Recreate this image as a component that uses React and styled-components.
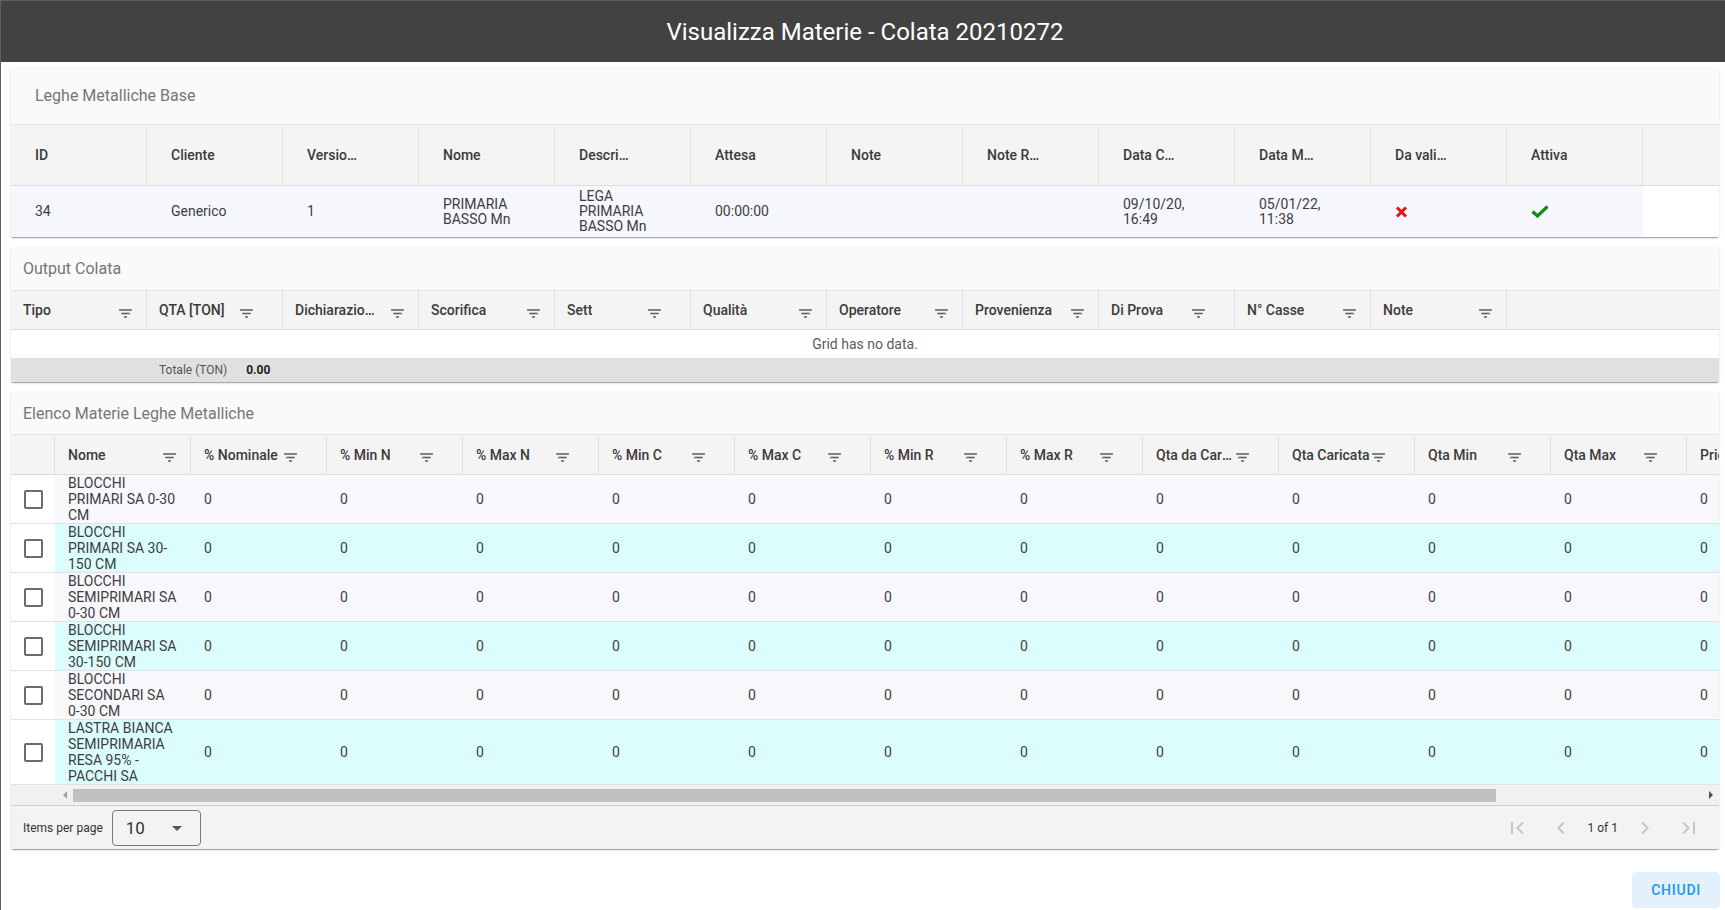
import React from 'react';
import styled, { createGlobalStyle } from 'styled-components';

const GlobalStyle = createGlobalStyle`
  *, *::before, *::after { box-sizing: border-box; }
  html, body { margin: 0; padding: 0; }
  body {
    background: #5f5f5f;
    font-family: Roboto, "Noto Sans", "Liberation Sans", sans-serif;
    overflow: hidden;
  }
`;

const Modal = styled.div`
  margin: 1px 0 0 1px;
  width: 1724px;
  height: 909px;
  background: #ffffff;
  display: flex;
  flex-direction: column;
  overflow: hidden;
`;

const TitleBar = styled.header`
  flex: 0 0 61px;
  background: #424242;
  color: #ffffff;
  display: flex;
  align-items: center;
  justify-content: center;
  padding-left: 4px;
  font-size: 24px;
  font-weight: 400;
`;

const Body = styled.main`
  display: flex;
  flex-direction: column;
  gap: 10px;
  padding: 5px 6px 0 10px;
`;

const Card = styled.section`
  flex-shrink: 0;
  background: #ffffff;
  border-radius: 2px;
  overflow: hidden;
  box-shadow: 0 2px 1px -1px rgba(0, 0, 0, 0.2), 0 1px 1px 0 rgba(0, 0, 0, 0.14),
    0 1px 3px 0 rgba(0, 0, 0, 0.12);
`;

const CardTitle = styled.div`
  height: ${(p) => p.$h}px;
  padding-left: ${(p) => p.$indent}px;
  display: flex;
  align-items: center;
  background: #fafafa;
  border-bottom: 1px solid #e4e4e4;
  color: #767676;
  font-size: 16px;
`;

const Grid = styled.div`
  display: grid;
  grid-template-columns: ${(p) => p.$cols};
`;

const HeadRow = styled(Grid)`
  height: ${(p) => p.$h}px;
  background: #f4f4f4;
  border-bottom: 1px solid #dcdcdc;
`;

const HeadCell = styled.div`
  display: flex;
  align-items: center;
  min-width: 0;
  padding-left: ${(p) => p.$indent}px;
  padding-right: ${(p) => (p.$num ? 27 : 12)}px;
  border-right: ${(p) => (p.$filler ? 'none' : '1px solid #e2e2e2')};
  font-size: 14px;
  font-weight: 500;
  color: #3b3b3b;
`;

const HeadLabel = styled.span`
  display: block;
  max-width: ${(p) => p.$max}px;
  overflow: hidden;
  white-space: nowrap;
  text-overflow: ellipsis;
`;

const FilterGlyph = styled.svg`
  flex-shrink: 0;
  margin-left: auto;
  margin-top: 6px;
  color: #5a5a5a;
`;

const BaseRow = styled(Grid)`
  min-height: 51px;
`;

const BaseCell = styled.div`
  display: flex;
  align-items: center;
  padding: 0 24px;
  background: ${(p) => (p.$filler ? '#ffffff' : '#f6f7fc')};
  font-size: 14px;
  line-height: 15px;
  color: #3d3d3d;
`;

const EmptyRow = styled.div`
  height: 28px;
  display: flex;
  align-items: center;
  justify-content: center;
  font-size: 14px;
  color: #5c5c5c;
`;

const SummaryRow = styled(Grid)`
  height: 24px;
  background: #e0e0e0;
  font-size: 12px;
  color: #555;
`;

const SummaryCell = styled.div`
  display: flex;
  align-items: center;
  gap: 19px;
  padding-left: 12px;
  white-space: nowrap;
`;

const SummaryValue = styled.span`
  font-weight: 700;
  color: #222;
`;

const DataRow = styled(Grid)`
  min-height: 49px;
  background: ${(p) => (p.$alt ? '#dcfdfd' : '#f8f8fc')};
  border-bottom: 1px solid #e2e2e2;
`;

const CheckCell = styled.div`
  display: flex;
  align-items: center;
  justify-content: center;
  background: #ffffff;
`;

const CheckBox = styled.span`
  width: 19px;
  height: 19px;
  border: 2px solid #6b6b6b;
  border-radius: 2px;
  background: #ffffff;
`;

const ValueCell = styled.div`
  display: flex;
  align-items: center;
  padding: 0 12px 0 13px;
  font-size: 14px;
  line-height: 16px;
  color: #3d3d3d;
`;

const ScrollBar = styled.div`
  height: 21px;
  display: flex;
  align-items: stretch;
  padding: 0 1px 0 46px;
  background: #f1f1f1;
  border-bottom: 1px solid #cfcfcf;
`;

const ScrollArrow = styled.div`
  width: 15px;
  display: flex;
  align-items: center;
  justify-content: center;
  &::before {
    content: '';
    border-top: 4px solid transparent;
    border-bottom: 4px solid transparent;
    ${(p) =>
      p.$dir === 'left'
        ? 'border-right: 4px solid #a3a3a3;'
        : 'border-left: 4px solid #505050;'}
  }
`;

const ScrollTrack = styled.div`
  flex: 1;
  display: flex;
  align-items: flex-end;
  padding-bottom: 3px;
`;

const ScrollThumb = styled.div`
  height: 13px;
  margin-left: 1px;
  width: ${(p) => p.$ratio * 100}%;
  background: #c1c1c1;
`;

const Pager = styled.div`
  height: 43px;
  display: flex;
  align-items: center;
  padding: 0 13px 0 12px;
  background: #f3f3f3;
  font-size: 12px;
  color: #333;
`;

const PerPage = styled.div`
  margin-left: 9px;
  width: 89px;
  height: 36px;
  border: 1px solid #7a7a7a;
  border-radius: 4px;
  display: flex;
  align-items: center;
  justify-content: space-between;
  padding: 0 11px 0 13px;
  font-size: 17px;
  color: #333;
  svg { color: #555; }
`;

const PageNav = styled.div`
  margin-left: auto;
  display: flex;
  align-items: center;
  gap: 10px;
`;

const NavBtn = styled.span`
  width: 34px;
  height: 34px;
  display: flex;
  align-items: center;
  justify-content: center;
  color: #c6c6c6;
`;

const Actions = styled.footer`
  flex: 1;
  display: flex;
  justify-content: flex-end;
  align-items: flex-end;
  padding: 0 5px 2px 0;
`;

const CloseButton = styled.button`
  height: 36px;
  padding: 0 19px;
  border: none;
  border-radius: 4px;
  background: #e3f1fc;
  color: #1a98f0;
  font-family: Roboto, "Noto Sans", sans-serif;
  font-size: 14px;
  font-weight: 500;
  letter-spacing: 0.75px;
`;

const Icon = ({ d, size = 24 }) => (
  <svg width={size} height={size} viewBox="0 0 24 24">
    <path d={d} fill="currentColor" />
  </svg>
);

const FilterIcon = () => (
  <FilterGlyph width="17" height="17" viewBox="0 0 24 24">
    <path d="M10 18h4v-2h-4v2zM3 6v2h18V6H3zm3 7h12v-2H6v2z" fill="currentColor" />
  </FilterGlyph>
);

const CrossMark = () => (
  <svg width="13" height="12" viewBox="0 0 13 12">
    <path d="M2 1.5L11 10.5M11 1.5L2 10.5" stroke="#e81212" strokeWidth="3" strokeLinecap="butt" />
  </svg>
);

const CheckMark = () => (
  <svg width="18" height="13" viewBox="0 0 18 13">
    <path d="M1.5 6.5L6.5 11L16.5 1.5" stroke="#148a14" strokeWidth="3.2" fill="none" />
  </svg>
);

const baseCols = 'repeat(12, 136px) 1fr';
const baseHeaders = [
  'ID', 'Cliente', 'Versione', 'Nome', 'Descrizione', 'Attesa', 'Note',
  'Note Revisione', 'Data Creazione', 'Data Modifica', 'Da validare', 'Attiva',
];
const baseRow = [
  '34', 'Generico', '1', 'PRIMARIA BASSO Mn', 'LEGA PRIMARIA BASSO Mn', '00:00:00', '', '',
  '09/10/20, 16:49', '05/01/22, 11:38', 'cross', 'check',
];

const outCols = 'repeat(11, 136px) 1fr';
const outHeaders = [
  { t: 'Tipo' }, { t: 'QTA [TON]', num: true }, { t: 'Dichiarazione' }, { t: 'Scorifica' },
  { t: 'Sett', num: true }, { t: 'Qualità' }, { t: 'Operatore' }, { t: 'Provenienza' },
  { t: 'Di Prova', num: true }, { t: 'N° Casse' }, { t: 'Note' },
];

const matCols = '44px repeat(14, 136px)';
const matHeaders = [
  { t: 'Nome' }, { t: '% Nominale', num: true }, { t: '% Min N', num: true },
  { t: '% Max N', num: true }, { t: '% Min C', num: true }, { t: '% Max C', num: true },
  { t: '% Min R', num: true }, { t: '% Max R', num: true }, { t: 'Qta da Caricare', num: true },
  { t: 'Qta Caricata', num: true }, { t: 'Qta Min', num: true }, { t: 'Qta Max', num: true },
  { t: 'Priorità', num: true }, { t: 'Prezzo', num: true },
];
const materials = [
  'BLOCCHI PRIMARI SA 0-30 CM',
  'BLOCCHI PRIMARI SA 30-150 CM',
  'BLOCCHI SEMIPRIMARI SA 0-30 CM',
  'BLOCCHI SEMIPRIMARI SA 30-150 CM',
  'BLOCCHI SECONDARI SA 0-30 CM',
  'LASTRA BIANCA SEMIPRIMARIA RESA 95% - PACCHI SA',
];

const ICONS = {
  first: 'M18.41 16.59L13.82 12l4.59-4.59L17 6l-6 6 6 6zM6 6h2v12H6z',
  prev: 'M15.41 7.41L14 6l-6 6 6 6 1.41-1.41L10.83 12z',
  next: 'M10 6L8.59 7.41 13.17 12l-4.58 4.59L10 18l6-6z',
  last: 'M5.59 7.41L10.18 12l-4.59 4.59L7 18l6-6-6-6zM16 6h2v12h-2z',
  drop: 'M7 10l5 5 5-5z',
};

export default function App() {
  const trackWidth = 1631;
  const visibleWidth = 1423;
  return (
    <>
      <GlobalStyle />
      <Modal>
        <TitleBar>Visualizza Materie - Colata 20210272</TitleBar>
        <Body>
          <Card>
            <CardTitle $h={58} $indent={24}>Leghe Metalliche Base</CardTitle>
            <HeadRow $cols={baseCols} $h={61}>
              {baseHeaders.map((h) => (
                <HeadCell key={h} $indent={24}>
                  <HeadLabel $max={55}>{h}</HeadLabel>
                </HeadCell>
              ))}
              <HeadCell $filler />
            </HeadRow>
            <BaseRow $cols={baseCols}>
              {baseRow.map((v, i) => (
                <BaseCell key={i}>
                  {v === 'cross' ? <CrossMark /> : v === 'check' ? <CheckMark /> : v}
                </BaseCell>
              ))}
              <BaseCell $filler />
            </BaseRow>
          </Card>

          <Card>
            <CardTitle $h={44} $indent={12}>Output Colata</CardTitle>
            <HeadRow $cols={outCols} $h={39}>
              {outHeaders.map((h) => (
                <HeadCell key={h.t} $indent={12} $num={h.num}>
                  <HeadLabel $max={82}>{h.t}</HeadLabel>
                  <FilterIcon />
                </HeadCell>
              ))}
              <HeadCell $filler />
            </HeadRow>
            <EmptyRow>Grid has no data.</EmptyRow>
            <SummaryRow $cols={outCols}>
              <div />
              <SummaryCell>
                Totale (TON)
                <SummaryValue>0.00</SummaryValue>
              </SummaryCell>
            </SummaryRow>
          </Card>

          <Card>
            <CardTitle $h={43} $indent={12}>Elenco Materie Leghe Metalliche</CardTitle>
            <HeadRow $cols={matCols} $h={40}>
              <HeadCell />
              {matHeaders.map((h) => (
                <HeadCell key={h.t} $indent={13} $num={h.num}>
                  <HeadLabel $max={82}>{h.t}</HeadLabel>
                  <FilterIcon />
                </HeadCell>
              ))}
            </HeadRow>
            {materials.map((m, r) => (
              <DataRow key={m} $cols={matCols} $alt={r % 2 === 1}>
                <CheckCell>
                  <CheckBox />
                </CheckCell>
                <ValueCell>{m}</ValueCell>
                {matHeaders.slice(1).map((h) => (
                  <ValueCell key={h.t}>0</ValueCell>
                ))}
              </DataRow>
            ))}
            <ScrollBar>
              <ScrollArrow $dir="left" />
              <ScrollTrack>
                <ScrollThumb $ratio={visibleWidth / trackWidth} />
              </ScrollTrack>
              <ScrollArrow $dir="right" />
            </ScrollBar>
            <Pager>
              Items per page
              <PerPage>
                10
                <Icon d={ICONS.drop} />
              </PerPage>
              <PageNav>
                <NavBtn><Icon d={ICONS.first} /></NavBtn>
                <NavBtn><Icon d={ICONS.prev} /></NavBtn>
                <span>1 of 1</span>
                <NavBtn><Icon d={ICONS.next} /></NavBtn>
                <NavBtn><Icon d={ICONS.last} /></NavBtn>
              </PageNav>
            </Pager>
          </Card>
        </Body>
        <Actions>
          <CloseButton>CHIUDI</CloseButton>
        </Actions>
      </Modal>
    </>
  );
}
